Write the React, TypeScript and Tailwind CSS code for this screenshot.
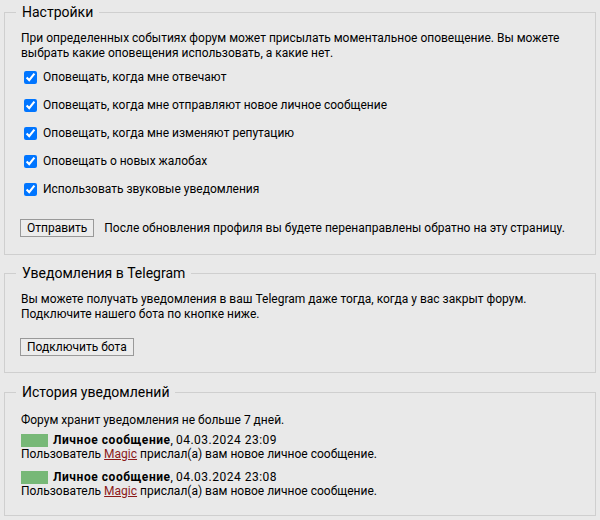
import { useState } from 'react';

const options = [
  'Оповещать, когда мне отвечают',
  'Оповещать, когда мне отправляют новое личное сообщение',
  'Оповещать, когда мне изменяют репутацию',
  'Оповещать о новых жалобах',
  'Использовать звуковые уведомления',
];

const history = [
  { date: '04.03.2024 23:09', user: 'Magic' },
  { date: '04.03.2024 23:08', user: 'Magic' },
];

function Legend({ children }: { children: React.ReactNode }) {
  return (
    <legend className="ml-[-5px] px-[6px] text-[14px] leading-[20px]">{children}</legend>
  );
}

export default function App() {
  const [checked, setChecked] = useState(options.map(() => true));

  return (
    <div className="min-h-[520px] bg-[#e9e9e9] px-1 pt-[2px] font-['Roboto',sans-serif] text-[12px] leading-[15px] text-black">
      <fieldset className="border border-[#cfcfcf] pl-[16px] pr-4 pt-[9px] pb-[17px]">
        <Legend>Настройки</Legend>
        <p>
          При определенных событиях форум может присылать моментальное оповещение. Вы можете
          выбрать какие оповещения использовать, а какие нет.
        </p>
        <div className="mt-[9px] flex flex-col gap-[13px]">
          {options.map((label, i) => (
            <label key={label} className="flex h-[15px] items-center gap-[6px]">
              <input
                type="checkbox"
                className="ml-[3px] h-[13px] w-[13px]"
                checked={checked[i]}
                onChange={() => setChecked((c) => c.map((v, j) => (j === i ? !v : v)))}
              />
              {label}
            </label>
          ))}
        </div>
        <div className="mt-[22px] flex items-center gap-[10px]">
          <button className="ml-[-1px] h-[18px] border border-[#999] bg-[#ececec] px-[6px] leading-[15px]">
            Отправить
          </button>
          <span>После обновления профиля вы будете перенаправлены обратно на эту страницу.</span>
        </div>
      </fieldset>

      <fieldset className="mt-[8px] border border-[#cfcfcf] pl-[16px] pr-4 pt-[9px] pb-[16px]">
        <Legend>Уведомления в Telegram</Legend>
        <p>
          Вы можете получать уведомления в ваш Telegram даже тогда, когда у вас закрыт форум.
          <br />
          Подключите нашего бота по кнопке ниже.
        </p>
        <button className="ml-[-1px] mt-[16px] h-[18px] border border-[#999] bg-[#ececec] px-[6px] leading-[15px]">
          Подключить бота
        </button>
      </fieldset>

      <fieldset className="mt-[9px] border border-[#cfcfcf] pl-[16px] pr-4 pt-[11px] pb-[17px]">
        <Legend>История уведомлений</Legend>
        <p>Форум хранит уведомления не больше 7 дней.</p>
        <div className="mt-[5px] flex flex-col gap-[9px]">
          {history.map((h) => (
            <div key={h.date} className="leading-[14px]">
              <div className="flex items-center gap-[5px]">
                <span className="inline-block h-[13px] w-[27px] bg-[#77b877]" />
                <span>
                  <b className="tracking-[0.55px]">Личное сообщение</b>,{' '}
                  <span className="tracking-[0.5px]">{h.date}</span>
                </span>
              </div>
              <div>
                Пользователь{' '}
                <a href="#" className="text-[#8b1a1a] underline">
                  {h.user}
                </a>{' '}
                прислал(а) вам новое личное сообщение.
              </div>
            </div>
          ))}
        </div>
      </fieldset>
    </div>
  );
}
